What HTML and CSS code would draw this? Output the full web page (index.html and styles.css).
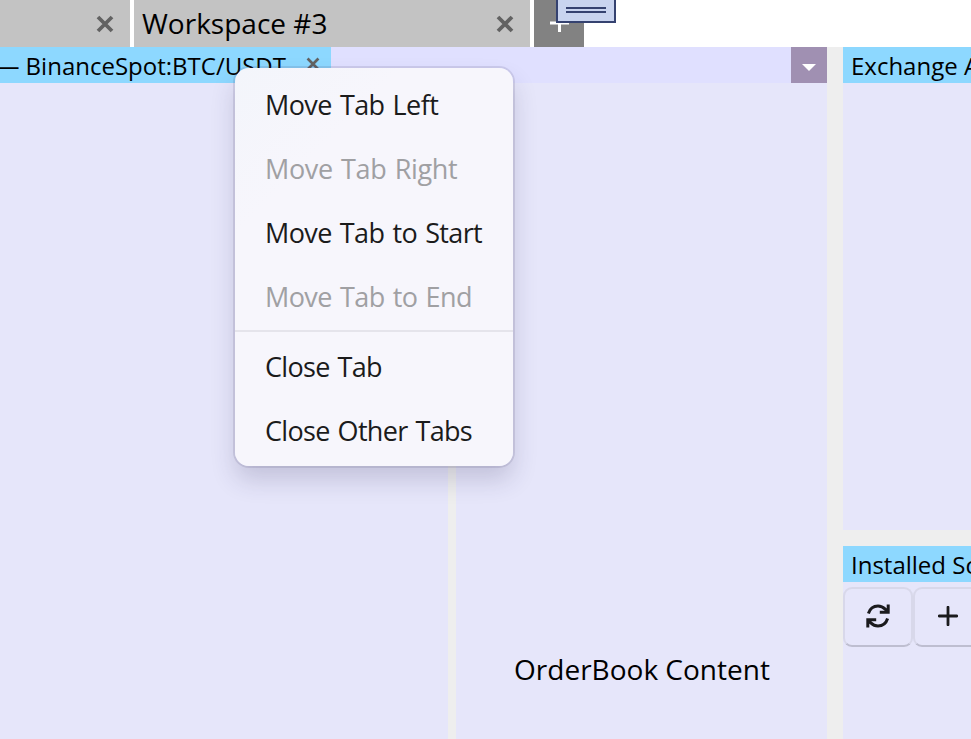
FILE: index.html
```
<!DOCTYPE html>
<html lang="en">
<head>
<meta charset="utf-8">
<title>Workspace</title>
<link rel="stylesheet" href="styles.css">
</head>
<body>
<div class="app">
  <nav class="workspaces">
    <div class="workspace workspace-first"><svg class="close" viewBox="0 0 18 18"><path d="M2 2 16 16M16 2 2 16"/></svg></div>
    <div class="workspace workspace-active"><span>Workspace #3</span><svg class="close" viewBox="0 0 18 18"><path d="M2 2 16 16M16 2 2 16"/></svg></div>
    <button class="add" aria-label="Add workspace"><svg viewBox="0 0 20 20"><path d="M0 10H19M9.5 1V19"/></svg></button>
  </nav>
  <main class="layout">
    <section class="main-panel">
      <header class="tabs">
        <div class="tab"><span>— BinanceSpot:BTC/USDT</span><svg class="close close-small" viewBox="0 0 18 18"><path d="M2 2 16 16M16 2 2 16"/></svg></div>
        <button class="dropdown" aria-label="Tab list"><svg viewBox="0 0 14 8"><path d="M0 0H14L7 7Z"/></svg></button>
      </header>
      <div class="split">
        <div class="pane"></div>
        <div class="pane orderbook"><span>OrderBook Content</span></div>
      </div>
    </section>
    <aside class="side">
      <section class="side-panel accounts"><header class="title">Exchange Accounts</header></section>
      <section class="side-panel scripts">
        <header class="title">Installed Scripts</header>
        <div class="tools">
          <button class="tool" aria-label="Refresh"><svg class="refresh" viewBox="0 0 24 24"><path d="M2.4 9.5C4.1 4.1 8 2 12 2C15.1 2 17.4 3.3 19.2 5.1L21.5 7.7M13.8 8.2H22.2V0.5M21.6 14.5C19.9 19.9 16 22 12 22C8.9 22 6.6 20.7 4.8 18.9L2.5 16.3M10.2 15.8H1.8V23.5"/></svg></button>
          <button class="tool" aria-label="Add"><svg class="plus" viewBox="0 0 20 20"><path d="M1.2 10H18.8M10 1.2V18.8"/></svg></button>
        </div>
      </section>
    </aside>
  </main>
  <div class="drag-icon"><i></i><i></i></div>
  <div class="menu">
    <div class="item"><span class="left">Move Tab Left</span></div>
    <div class="item disabled"><span class="right">Move Tab Right</span></div>
    <div class="item"><span class="start">Move Tab to Start</span></div>
    <div class="item disabled"><span class="end">Move Tab to End</span></div>
    <div class="separator"></div>
    <div class="item"><span class="one">Close Tab</span></div>
    <div class="item"><span class="others">Close Other Tabs</span></div>
  </div>
</div>
</body>
</html>
```
FILE: styles.css
```
* { box-sizing: border-box; }
body { margin: 0; overflow: hidden; font-family: "Open Sans", sans-serif; color: #000; background: #fff; }
button { border: 0; padding: 0; font: inherit; }
svg { display: block; }
.app { position: relative; width: 971px; height: 739px; overflow: hidden; display: flex; flex-direction: column; }
.workspaces { height: 47px; display: flex; gap: 4px; flex: none; }
.workspace { display: flex; align-items: center; justify-content: space-between; background: #c3c3c3; padding: 0 16px 0 8px; font-size: 28px; white-space: nowrap; }
.workspace span { padding-bottom: 2px; }
.workspace-first { width: 130px; justify-content: flex-end; }
.workspace-active { width: 396px; }
.close { width: 18px; height: 18px; flex: none; fill: none; stroke: #626262; stroke-width: 3.8; }
.close-small { width: 14px; height: 14px; margin: 0 0 2px; stroke-width: 3.4; }
.add { width: 50px; background: #828282; display: flex; align-items: center; justify-content: center; }
.add svg { width: 20px; height: 20px; margin: -1px 0 0 2px; fill: none; stroke: #fff; stroke-width: 3; }
.layout { flex: 1; display: flex; gap: 16px; background: #eee; min-height: 0; }
.main-panel { width: 827px; flex: none; display: flex; flex-direction: column; }
.tabs { height: 36px; display: flex; justify-content: space-between; background: #e0e0ff; }
.tab { width: 331px; display: flex; align-items: center; justify-content: flex-end; gap: 20px; padding-right: 11px; background: #8dd8ff; font-size: 24px; white-space: nowrap; }
.dropdown { width: 36px; background: #a090b2; display: flex; align-items: center; justify-content: center; }
.dropdown svg { width: 14px; height: 8px; margin-top: 5px; fill: #fff; }
.split { flex: 1; display: flex; gap: 8px; }
.pane { width: 448px; background: #e6e6fa; }
.orderbook { width: 371px; display: flex; justify-content: center; padding: 567px 0 0 1px; font-size: 28px; white-space: nowrap; }
.side { flex: 1; min-width: 0; display: flex; flex-direction: column; gap: 16px; }
.side-panel { background: #e6e6fa; overflow: hidden; }
.accounts { height: 483px; }
.scripts { flex: 1; }
.title { height: 36px; line-height: 38px; padding-left: 8px; background: #8dd8ff; font-size: 24px; white-space: nowrap; }
.tools { display: flex; padding-top: 5px; gap: 0; }
.tool { width: 70px; height: 60px; flex: none; display: flex; align-items: center; justify-content: center; background: transparent; border: 2px solid #d8d8ea; border-bottom-color: #bebed0; border-radius: 9px; }
.refresh { width: 24px; height: 24px; margin-top: -3px; fill: none; stroke: #1b1b1d; stroke-width: 3; }
.plus { width: 20px; height: 20px; margin-top: -3px; fill: none; stroke: #1b1b1d; stroke-width: 2.8; stroke-linecap: round; }
.drag-icon { position: absolute; left: 556px; top: -2px; width: 60px; height: 25px; background: #c9d4ef; border: 2px solid #354270; padding: 7px 8px; display: flex; flex-direction: column; gap: 2px; }
.drag-icon i { height: 2px; background: #354270; flex: none; }
.menu { position: absolute; left: 235px; top: 68px; width: 278px; height: 398px; padding: 6px 0; border-radius: 14px; background: linear-gradient(135deg, #f3f5fb, #f7f6fc 25%); box-shadow: 0 0 0 2px rgba(80, 70, 110, .14), 0 14px 24px rgba(50, 40, 90, .19); font-size: 27px; color: #1b1b1b; }
.item { height: 64px; padding: 0 0 4px 30px; display: flex; align-items: center; white-space: nowrap; word-spacing: 1.7px; }
.disabled { color: #a0a0a3; }
.separator { height: 2px; margin: 0 0 4px; background: #e5e4eb; }
.left { letter-spacing: -.6px; }
.right { letter-spacing: -.36px; }
.start { letter-spacing: -.62px; }
.end { letter-spacing: -.58px; }
.one { letter-spacing: -.7px; }
.others { letter-spacing: -.7px; }
```
